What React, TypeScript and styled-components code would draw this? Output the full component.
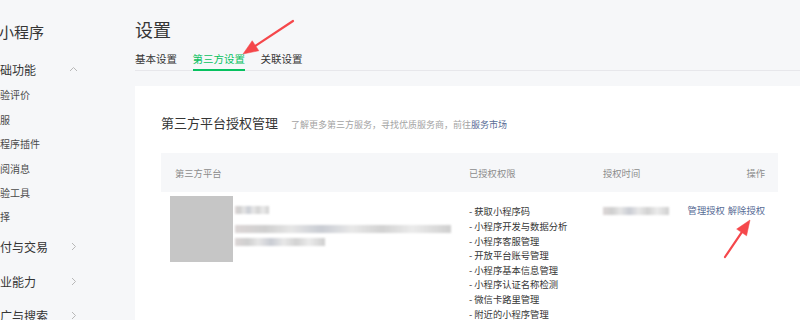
import React from "react";
import styled, { createGlobalStyle } from "styled-components";

const GlobalStyle = createGlobalStyle`
  html, body {
    margin: 0;
    padding: 0;
    background: #f6f7f9;
    overflow: hidden;
  }
  body {
    font-family: "Noto Sans CJK SC", "Noto Sans", sans-serif;
    color: #353535;
  }
`;

const Page = styled.div`
  position: relative;
  display: flex;
  width: 804px;
  height: 320px;
  overflow: hidden;
`;

const Sidebar = styled.aside`
  width: 135px;
  flex-shrink: 0;
  padding-top: 22px;
  overflow: hidden;
`;

const SideTitle = styled.div`
  margin-left: -1px;
  font-size: 15px;
  line-height: 20px;
  color: #353535;
`;

const MenuGroup = styled.div<{ $first?: boolean }>`
  display: flex;
  align-items: center;
  justify-content: space-between;
  width: 90px;
  margin-left: -12px;
  margin-top: ${({ $first }) => ($first ? "15px" : "0")};
  height: ${({ $first }) => ($first ? "24px" : "34.5px")};
  font-size: 12px;
  color: #353535;
`;

const SubList = styled.ul`
  list-style: none;
  margin: 0;
  padding: 2.4px 0 0;
`;

const SubItem = styled.li`
  margin-left: -10px;
  height: 24.4px;
  line-height: 24.4px;
  font-size: 10px;
  color: #4a4a4a;
  white-space: nowrap;
`;

const Chevron = ({ up }: { up?: boolean }) => (
  <svg width="9" height="9" viewBox="0 0 9 9">
    <path
      d={up ? "M1 6 L4.5 2.5 L8 6" : "M3 1 L6.5 4.5 L3 8"}
      fill="none"
      stroke="#b8b8b8"
      strokeWidth="1"
    />
  </svg>
);

const Main = styled.main`
  flex: 1;
  min-width: 0;
`;

const PageTitle = styled.h1`
  margin: 17px 0 0;
  font-size: 18px;
  line-height: 24px;
  font-weight: 400;
  color: #353535;
`;

const TabBar = styled.div`
  display: flex;
  gap: 15.5px;
  margin-top: 6px;
  border-bottom: 1px solid #e7e7eb;
`;

const Tab = styled.div<{ $active?: boolean }>`
  padding: 4px 0 2px;
  margin-bottom: -1px;
  font-size: 10.5px;
  line-height: 16px;
  color: ${({ $active }) => ($active ? "#07c160" : "#353535")};
  border-bottom: 2px solid ${({ $active }) => ($active ? "#07c160" : "transparent")};
`;

const Card = styled.section`
  margin-top: 15px;
  background: #ffffff;
  padding: 27px 26px 20px 26px;
  height: 260px;
`;

const CardHead = styled.div`
  display: flex;
  align-items: baseline;
  gap: 13px;
`;

const CardTitle = styled.h2`
  margin: 0;
  font-size: 13px;
  line-height: 20px;
  font-weight: 400;
  color: #353535;
`;

const CardTip = styled.span`
  font-size: 9px;
  color: #a3a3a3;
`;

const Link = styled.a`
  color: #576b95;
  text-decoration: none;
`;

const Table = styled.div`
  margin-top: 20px;
`;

const Row = styled.div<{ $head?: boolean }>`
  display: grid;
  grid-template-columns: 294px 134px 1fr auto;
  align-items: ${({ $head }) => ($head ? "center" : "start")};
  height: ${({ $head }) => ($head ? "39px" : "auto")};
  padding: ${({ $head }) => ($head ? "0 13px 0 14px" : "4px 13px 0 14px")};
  background: ${({ $head }) => ($head ? "#f6f7f9" : "transparent")};
  font-size: 9.3px;
  color: ${({ $head }) => ($head ? "#8c8c8c" : "#353535")};
`;

const Platform = styled.div`
  display: flex;
  gap: 2px;
  margin-left: -5px;
`;

const Avatar = styled.div`
  width: 63px;
  height: 66px;
  background: #c6c6c6;
`;

const Blurred = styled.div`
  display: flex;
  flex-direction: column;
  padding-top: 10px;
`;

const BlurBar = styled.div<{ $w: number; $mt: number }>`
  width: ${({ $w }) => $w}px;
  height: 8px;
  margin-top: ${({ $mt }) => $mt}px;
  background: linear-gradient(
    90deg,
    #dcd6d6 0%,
    #cfcfcf 14%,
    #e6e6e6 26%,
    #c9ccd3 40%,
    #e8e8e8 54%,
    #d2d2d2 68%,
    #ebebeb 82%,
    #cfcfcf 100%
  );
  filter: blur(0.8px);
`;

const PermList = styled.ul`
  list-style: none;
  margin: 0;
  padding: 8.4px 0 0;
  line-height: 14.6px;
`;

const TimeCell = styled.div`
  padding-top: 11px;
`;

const Actions = styled.div`
  display: flex;
  gap: 3px;
  padding-top: 7px;
  line-height: 14px;
`;

const HeadRight = styled.div`
  text-align: right;
`;

const Overlay = styled.svg`
  position: absolute;
  left: 0;
  top: 0;
  pointer-events: none;
`;

const perms = [
  "获取小程序码",
  "小程序开发与数据分析",
  "小程序客服管理",
  "开放平台账号管理",
  "小程序基本信息管理",
  "小程序认证名称检测",
  "微信卡路里管理",
  "附近的小程序管理",
];

const subItems = ["体验评价", "客服", "小程序插件", "订阅消息", "体验工具", "选择"];

const Arrow = ({ x1, y1, x2, y2 }: { x1: number; y1: number; x2: number; y2: number }) => {
  const dx = x2 - x1;
  const dy = y2 - y1;
  const len = Math.hypot(dx, dy);
  const ux = dx / len;
  const uy = dy / len;
  const headLen = 15;
  const headW = 6;
  const bx = x2 - ux * headLen;
  const by = y2 - uy * headLen;
  const px = -uy;
  const py = ux;
  const pts = `${x2},${y2} ${bx + px * headW},${by + py * headW} ${bx - px * headW},${by - py * headW}`;
  return (
    <g fill="#f5474b" stroke="#f5474b">
      <line x1={x1} y1={y1} x2={bx + ux * 2} y2={by + uy * 2} strokeWidth="2.2" strokeLinecap="round" />
      <polygon points={pts} strokeWidth="0.5" />
    </g>
  );
};

const App = () => {
  return (
    <>
      <GlobalStyle />
      <Page>
        <Sidebar>
          <SideTitle>小程序</SideTitle>
          <MenuGroup $first>
            <span>基础功能</span>
            <Chevron up />
          </MenuGroup>
          <SubList>
            {subItems.map((s) => (
              <SubItem key={s}>{s}</SubItem>
            ))}
          </SubList>
          <MenuGroup>
            <span>支付与交易</span>
            <Chevron />
          </MenuGroup>
          <MenuGroup>
            <span>企业能力</span>
            <Chevron />
          </MenuGroup>
          <MenuGroup>
            <span>推广与搜索</span>
            <Chevron />
          </MenuGroup>
        </Sidebar>
        <Main>
          <PageTitle>设置</PageTitle>
          <TabBar>
            <Tab>基本设置</Tab>
            <Tab $active>第三方设置</Tab>
            <Tab>关联设置</Tab>
          </TabBar>
          <Card>
            <CardHead>
              <CardTitle>第三方平台授权管理</CardTitle>
              <CardTip>
                了解更多第三方服务，寻找优质服务商，前往<Link href="#">服务市场</Link>
              </CardTip>
            </CardHead>
            <Table>
              <Row $head>
                <div>第三方平台</div>
                <div>已授权权限</div>
                <div>授权时间</div>
                <HeadRight>操作</HeadRight>
              </Row>
              <Row>
                <Platform>
                  <Avatar />
                  <Blurred>
                    <BlurBar $w={34} $mt={0} />
                    <BlurBar $w={216} $mt={11} />
                    <BlurBar $w={90} $mt={5} />
                  </Blurred>
                </Platform>
                <PermList>
                  {perms.map((p) => (
                    <li key={p}>- {p}</li>
                  ))}
                </PermList>
                <TimeCell>
                  <BlurBar $w={66} $mt={0} />
                </TimeCell>
                <Actions>
                  <Link href="#">管理授权</Link>
                  <Link href="#">解除授权</Link>
                </Actions>
              </Row>
            </Table>
          </Card>
        </Main>
        <Overlay width="800" height="320">
          <Arrow x1={293} y1={21} x2={243} y2={54} />
          <Arrow x1={725} y1={257} x2={750} y2={220} />
        </Overlay>
      </Page>
    </>
  );
};

export default App;
